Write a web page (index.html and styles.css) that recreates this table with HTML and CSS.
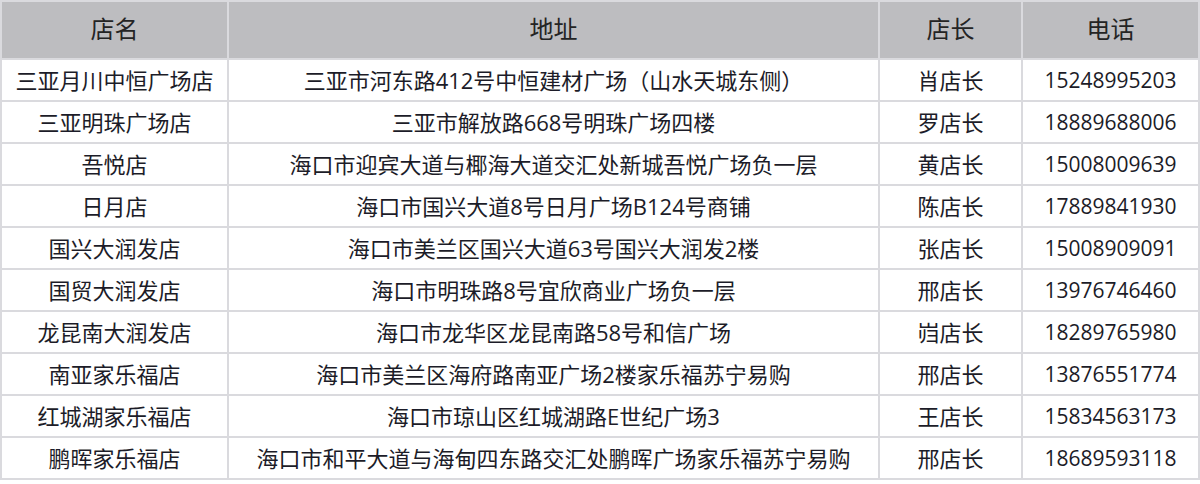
FILE: index.html
```html
<!DOCTYPE html>
<html lang="zh">
<head>
<meta charset="utf-8">
<link rel="stylesheet" href="styles.css">
</head>
<body>
<table class="stores">
  <colgroup>
    <col class="c-name"><col class="c-addr"><col class="c-mgr"><col class="c-tel">
  </colgroup>
  <thead>
    <tr><th>店名</th><th>地址</th><th>店长</th><th>电话</th></tr>
  </thead>
  <tbody>
    <tr><td>三亚月川中恒广场店</td><td>三亚市河东路412号中恒建材广场（山水天城东侧）</td><td>肖店长</td><td class="tel">15248995203</td></tr>
    <tr><td>三亚明珠广场店</td><td>三亚市解放路668号明珠广场四楼</td><td>罗店长</td><td class="tel">18889688006</td></tr>
    <tr><td>吾悦店</td><td>海口市迎宾大道与椰海大道交汇处新城吾悦广场负一层</td><td>黄店长</td><td class="tel">15008009639</td></tr>
    <tr><td>日月店</td><td>海口市国兴大道8号日月广场B124号商铺</td><td>陈店长</td><td class="tel">17889841930</td></tr>
    <tr><td>国兴大润发店</td><td>海口市美兰区国兴大道63号国兴大润发2楼</td><td>张店长</td><td class="tel">15008909091</td></tr>
    <tr><td>国贸大润发店</td><td>海口市明珠路8号宜欣商业广场负一层</td><td>邢店长</td><td class="tel">13976746460</td></tr>
    <tr><td>龙昆南大润发店</td><td>海口市龙华区龙昆南路58号和信广场</td><td>岿店长</td><td class="tel">18289765980</td></tr>
    <tr><td>南亚家乐福店</td><td>海口市美兰区海府路南亚广场2楼家乐福苏宁易购</td><td>邢店长</td><td class="tel">13876551774</td></tr>
    <tr><td>红城湖家乐福店</td><td>海口市琼山区红城湖路E世纪广场3</td><td>王店长</td><td class="tel">15834563173</td></tr>
    <tr><td>鹏晖家乐福店</td><td>海口市和平大道与海甸四东路交汇处鹏晖广场家乐福苏宁易购</td><td>邢店长</td><td class="tel">18689593118</td></tr>
  </tbody>
</table>
</body>
</html>
```

FILE: styles.css
```css
html, body {
  margin: 0;
  padding: 0;
  background: #ffffff;
}

.stores {
  border-collapse: collapse;
  table-layout: fixed;
  width: 1198px;
  font-family: "Segoe UI", "Open Sans", "Noto Sans CJK SC", sans-serif;
  color: #1c1c28;
}

.c-name { width: 227px; }
.c-addr { width: 651px; }
.c-mgr  { width: 143px; }
.c-tel  { width: 177px; }

.stores th,
.stores td {
  border: 2px solid #dadade;
  text-align: center;
  padding: 0;
  white-space: nowrap;
  overflow: hidden;
}

.stores th {
  background: #bdbdc0;
  height: 58px;
  padding-bottom: 5px;
  box-sizing: border-box;
  font-size: 24px;
  font-weight: normal;
  color: #242424;
}

.stores td {
  height: 40px;
  font-size: 22px;
  line-height: 40px;
}

.stores td.tel {
  font-size: 21px;
}
```
